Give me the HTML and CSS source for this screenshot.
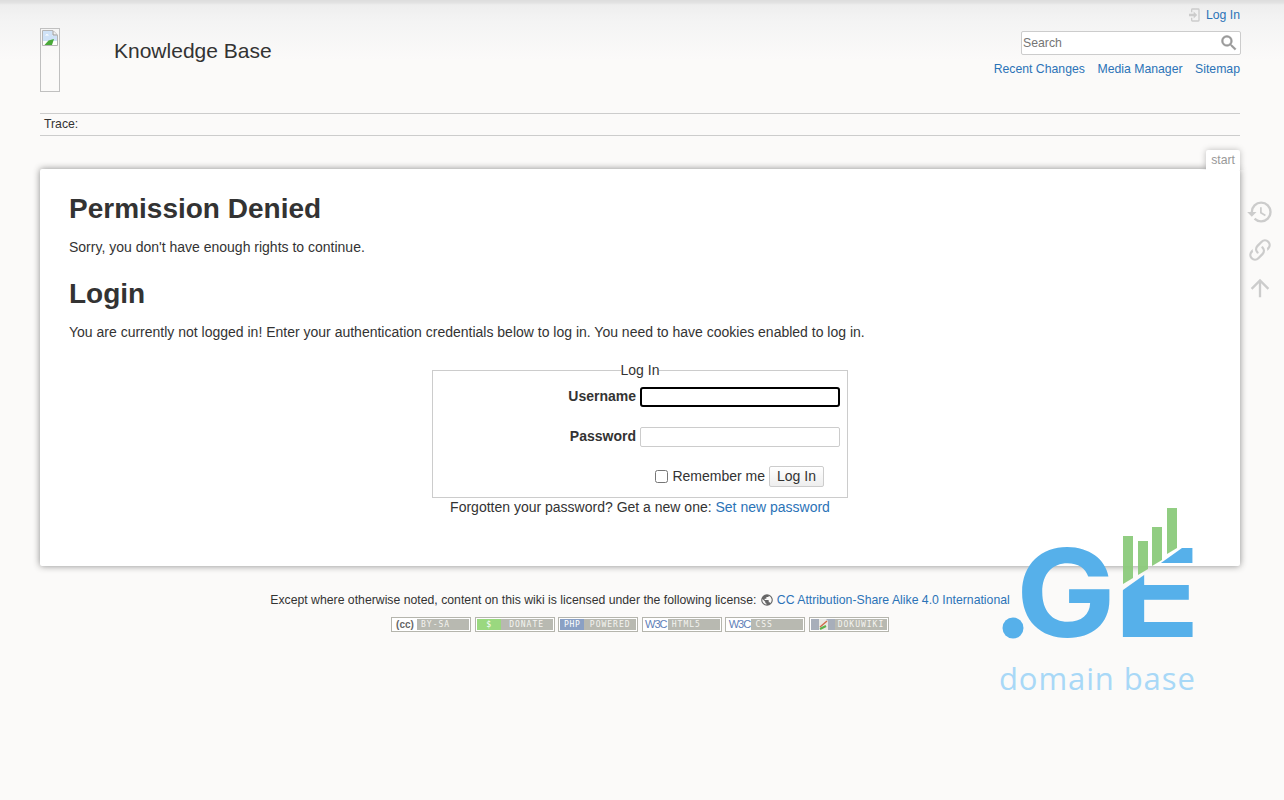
FILE: index.html
```html
<!DOCTYPE html>
<html lang="en">
<head>
<meta charset="utf-8">
<title>Knowledge Base</title>
<link rel="stylesheet" href="styles.css">
</head>
<body>
<div class="site">
  <header class="head">
    <div class="brand">
      <div class="broken"><svg width="16" height="16" viewBox="0 0 16 16"><path d="M.5.500H11L15.500 5V15.500H.5Z" fill="#fff" stroke="#b5b5b5"/><path d="M1 1H10.500V5.500H15V11H1Z" fill="#cfe2f7"/><path d="M3 5.500Q5 2.500 7 5.500Z" fill="#fff"/><path d="M2.500 15L6.500 10.500 12 9 10 15Z" fill="#4aa93a"/><path d="M11 1V5H15" fill="#f2f2f2" stroke="#999"/><path d="M12 15L15 12V15Z" fill="#fff"/></svg></div>
      <h1 class="title">Knowledge Base</h1>
    </div>
    <div class="tools">
      <div class="user"><a href="#" class="login"><svg class="login-ico" width="16" height="16" viewBox="0 0 24 24"><path d="M10 17.250V14H3v-4h7V6.750L15.250 12 10 17.250M8 2h9a2 2 0 0 1 2 2v16a2 2 0 0 1-2 2H8a2 2 0 0 1-2-2v-4h2v4h9V4H8v4H6V4a2 2 0 0 1 2-2z" fill="#ccc"/></svg>Log In</a></div>
      <form class="search">
        <input class="search-in" type="text" placeholder="Search">
        <svg class="search-ico" width="20" height="20" viewBox="0 0 24 24"><path d="M15.500 14h-.79l-.28-.27A6.471 6.471 0 0 0 16 9.500 6.500 6.500 0 1 0 9.500 16c1.610 0 3.090-.59 4.230-1.570l.27.28v.79l5 4.990L20.490 19l-4.990-5zm-6 0C7.010 14 5 11.990 5 9.500S7.010 5 9.500 5 14 7.010 14 9.500 11.990 14 9.500 14z" fill="#999" stroke="#999" stroke-width=".6"/></svg>
      </form>
      <nav class="links"><a href="#">Recent Changes</a><a href="#">Media Manager</a><a href="#">Sitemap</a></nav>
    </div>
  </header>
  <div class="trace">Trace:</div>
  <div class="wrap">
    <div class="pageid">start</div>
    <main class="page">
      <h2 class="h">Permission Denied</h2>
      <p class="para">Sorry, you don't have enough rights to continue.</p>
      <h2 class="h h-second">Login</h2>
      <p class="para para-second">You are currently not logged in! Enter your authentication credentials below to log in. You need to have cookies enabled to log in.</p>
      <form class="loginform">
        <fieldset class="fs">
          <legend class="lg">Log In</legend>
          <div class="row row-first"><label class="lb" for="u">Username</label><input id="u" class="in in-focus" type="text"></div>
          <div class="row"><label class="lb" for="p">Password</label><input id="p" class="in" type="password"></div>
          <div class="row-sub"><input class="cb" type="checkbox" id="r"><label for="r" class="rem">Remember me</label><button class="btn" type="button">Log In</button></div>
        </fieldset>
      </form>
      <p class="forgot">Forgotten your password? Get a new one: <a href="#">Set new password</a></p>
    </main>
    <aside class="side">
      <svg width="28" height="28" viewBox="0 0 24 24"><path d="M13.500 8H12v5l4.280 2.540.72-1.210-3.500-2.080V8M13 3a9 9 0 0 0-9 9H1l3.960 4.030L9 12H6a7 7 0 0 1 7-7 7 7 0 0 1 7 7 7 7 0 0 1-7 7c-1.930 0-3.680-.79-4.940-2.060l-1.420 1.420A8.896 8.896 0 0 0 13 21a9 9 0 0 0 9-9 9 9 0 0 0-9-9" fill="#ccc"/></svg>
      <svg width="28" height="28" viewBox="0 0 24 24"><path d="M10.590 13.410c.41.39.41 1.030 0 1.420-.39.39-1.030.39-1.420 0a5.003 5.003 0 0 1 0-7.070l3.540-3.540a5.003 5.003 0 0 1 7.070 0 5.003 5.003 0 0 1 0 7.070l-1.490 1.490c.01-.82-.12-1.640-.4-2.420l.47-.48a2.982 2.982 0 0 0 0-4.240 2.982 2.982 0 0 0-4.240 0l-3.530 3.530a2.982 2.982 0 0 0 0 4.240m2.820-4.240c.39-.39 1.030-.39 1.420 0a5.003 5.003 0 0 1 0 7.070l-3.540 3.540a5.003 5.003 0 0 1-7.070 0 5.003 5.003 0 0 1 0-7.070l1.490-1.490c-.01.82.12 1.640.4 2.430l-.47.47a2.982 2.982 0 0 0 0 4.240 2.982 2.982 0 0 0 4.240 0l3.530-3.530a2.982 2.982 0 0 0 0-4.240.973.973 0 0 1 0-1.420" fill="#ccc"/></svg>
      <svg width="28" height="28" viewBox="0 0 24 24"><path d="M13 20h-2V8l-5.500 5.500-1.420-1.420L12 4.160l7.920 7.920-1.420 1.420L13 8v12z" fill="#ccc"/></svg>
    </aside>
  </div>
  <footer class="foot">
    <div class="license">Except where otherwise noted, content on this wiki is licensed under the following license: <svg class="cc-ico" width="14" height="14" viewBox="0 0 24 24"><path d="M17.900 17.390c-.26-.8-1.010-1.390-1.900-1.390h-1v-3a1 1 0 0 0-1-1H8v-2h2a1 1 0 0 0 1-1V7h2a2 2 0 0 0 2-2v-.41a7.984 7.984 0 0 1 2.900 12.800M11 19.930c-3.950-.49-7-3.850-7-7.930 0-.62.080-1.220.21-1.790L9 15v1a2 2 0 0 0 2 2m1-16A10 10 0 0 0 2 12a10 10 0 0 0 10 10 10 10 0 0 0 10-10A10 10 0 0 0 12 2z" fill="#666"/></svg><a href="#">CC Attribution-Share Alike 4.0 International</a></div>
    <div class="buttons">
      <span class="badge"><span class="b-l b-cc">(cc)</span><span class="b-r">BY-SA</span></span>
      <span class="badge"><span class="b-l b-green">$</span><span class="b-r b-c">DONATE</span></span>
      <span class="badge"><span class="b-l b-php">PHP</span><span class="b-r b-c">POWERED</span></span>
      <span class="badge"><span class="b-l b-w3c">W3C</span><span class="b-r">HTML5</span></span>
      <span class="badge"><span class="b-l b-w3c">W3C</span><span class="b-r">CSS</span></span>
      <span class="badge"><span class="b-l b-doku"><svg width="24" height="11" viewBox="0 0 24 11"><path d="M8 0H15L17 2V11H8Z" fill="#e8e8e4"/><path d="M9 8L16 2" stroke="#d06a4a" stroke-width="1.500"/><path d="M9 10L15 7" stroke="#5cb04a" stroke-width="2"/></svg></span><span class="b-r b-c">DOKUWIKI</span></span>
    </div>
  </footer>
</div>
<svg class="logo" width="240" height="240" viewBox="980 480 240 240">
  <defs><clipPath id="ecut"><path d="M1100 607L1123 590L1182 548H1210V650H1100Z"/></clipPath></defs>
  <g fill="#8ccb7c" opacity=".95">
    <path d="M1123 536H1133V578L1123 584Z"/>
    <path d="M1138 541H1148V569L1138 575Z"/>
    <path d="M1152 527H1162V560L1152 566Z"/>
    <path d="M1167 508H1177V548L1167 554Z"/>
  </g>
  <circle cx="1013" cy="628" r="10.500" fill="#56b0ea"/>
  <text class="logo-g" transform="translate(1016 637) scale(1.090 1)">G</text>
  <g clip-path="url(#ecut)"><text class="logo-g" transform="translate(1113.600 637) scale(1.170 1)">E</text></g>
  <text class="logo-sub" x="999" y="690">domain base</text>
</svg>
</body>
</html>
```

FILE: styles.css
```css
html, body { margin: 0; padding: 0; }
body {
  min-height: 800px;
  background: #fbfaf9;
  color: #333;
  font: 14px/19.6px "Liberation Sans", Arial, sans-serif;
  position: relative;
  overflow: hidden;
}
body::before {
  content: "";
  position: absolute;
  left: 0; right: 0; top: 0;
  height: 60px;
  background: linear-gradient(#ddd 0, #e3e3e3 3px, #eee 5px, #f4f4f4 22px, #fbfaf9 60px);
}
a { color: #2b73b7; text-decoration: none; }
.site { position: relative; margin: 0 40px; width: 1200px; }
.head { display: flex; justify-content: space-between; height: 113px; }
.brand { display: flex; align-items: flex-start; padding-top: 28px; }
.broken { width: 18px; height: 62px; border: 1px solid #c0c0c0; display: block; line-height: 0; }
.broken svg { margin: 1px 0 0 1px; }
.title { margin: 10px 0 0 54px; font-size: 21px; line-height: 25px; font-weight: 400; color: #333; }
.tools { width: 260px; display: flex; flex-direction: column; align-items: flex-end; font-size: 12.250px; line-height: 16px; }
.user { padding-top: 7px; height: 16px; }
.login { display: flex; align-items: center; }
.login-ico { margin-right: 3px; }
.search { position: relative; margin-top: 8px; margin-right: -1px; line-height: 0; }
.search-in {
  width: 220px; height: 24px; box-sizing: border-box;
  border: 1px solid #ccc; border-radius: 2px; padding: 0 1px;
  font: 12.250px "Liberation Sans", Arial, sans-serif; color: #333; background: #fff;
}
.search-in::placeholder { color: #757575; opacity: 1; }
.search-ico { position: absolute; right: 2px; top: 2px; }
.links { display: flex; gap: 12.500px; margin-top: 6px; }
.trace { height: 21px; border-top: 1px solid #ccc; border-bottom: 1px solid #ccc; padding-left: 4px; font-size: 12.250px; line-height: 20px; }
.wrap { position: relative; margin-top: 33px; }
.pageid {
  position: absolute; right: 0; top: -19px;
  height: 20px; padding: 0 5px; background: #fff; color: #999;
  font-size: 12.250px; line-height: 20px;
  box-shadow: 0 0 6px rgba(0,0,0,.25);
  border-radius: 2px 2px 0 0;
  clip-path: inset(-8px -8px 0 -8px);
}
.page {
  background: #fff; height: 397px; box-sizing: border-box; padding: 23px 29px 0;
  border-radius: 2px;
  box-shadow: 0 0 7px rgba(0,0,0,.45);
}
.h { margin: 0; font-size: 28px; line-height: 33.600px; font-weight: 700; color: #333; }
.h-second { margin-top: 19px; }
.para { margin: 12px 0 0; height: 20px; }
.para-second { margin-top: 13px; }
.loginform { display: flex; justify-content: center; margin-top: 18px; }
.fs { width: 416px; box-sizing: border-box; height: 137px; margin: 0; padding: 0 7px; border: 1px solid #ccc; }
.lg { margin: 0 auto; padding: 0; line-height: 18px; text-align: center; }
.row { display: flex; justify-content: flex-end; align-items: center; gap: 4px; height: 20px; margin-top: 20px; }
.row-first { margin-top: 8px; }
.lb { font-weight: 700; }
.in { width: 200px; height: 20px; box-sizing: border-box; border: 1px solid #ccc; border-radius: 2px; padding: 0 4px; background: #fff; }
.in-focus { border: 2px solid #000; border-radius: 3px; }
.row-sub { display: flex; justify-content: flex-end; align-items: center; margin-top: 18px; padding-right: 16px; height: 22px; }
.cb { width: 13px; height: 13px; margin: 0 4px 0 1px; }
.rem { padding-top: 2px; }
.btn { height: 21px; width: 55px; margin-left: 4px; padding: 0; border: 1px solid #ccc; border-radius: 2px; background: linear-gradient(#fff,#eee); font: 14px "Liberation Sans", Arial, sans-serif; color: #333; }
.forgot { margin: 0; text-align: center; }
.side { position: absolute; left: 1206px; top: 29px; display: flex; flex-direction: column; gap: 10px; line-height: 0; }
.side svg { display: block; }
.foot { margin-top: 24px; font-size: 12.250px; }
.license { line-height: 20px; display: flex; justify-content: center; align-items: center; white-space: pre; }
.cc-ico { margin: 0 3px 0 0; }
.buttons { display: flex; justify-content: center; gap: 3.600px; margin-top: 7px; }
.badge { width: 80px; height: 15px; box-sizing: border-box; border: 1px solid #b5b5ad; padding: 1px; display: flex; background: #fff; font: 8px/11px "DejaVu Sans Mono", monospace; letter-spacing: 1px; color: #f4f4f0; overflow: hidden; }
.b-l { width: 24px; flex: none; display: block; text-align: center; background: #fff; color: #666; letter-spacing: 0; }
.b-r { flex: 1; background: #b8b9b1; padding-left: 4px; white-space: nowrap; }
.b-c { text-align: center; padding-left: 0; }
.b-cc { font: 700 10px/11px "Liberation Sans", sans-serif; }
.b-green { background: #9ad87f; color: #fff; }
.b-php { background: #8aa0c4; color: #fff; letter-spacing: .6px; }
.b-w3c { color: #5f80b8; font: 11px/11px "Liberation Sans", sans-serif; letter-spacing: -1px; }
.b-doku { background: #a7aeba; line-height: 0; }
.logo { position: absolute; left: 980px; top: 480px; }
.logo-g { font: 700 122px "Inter", sans-serif; fill: #56b0ea; }
.logo-sub { font: 400 31px "Open Sans", sans-serif; fill: #a8d8f7; letter-spacing: .9px; }
```
